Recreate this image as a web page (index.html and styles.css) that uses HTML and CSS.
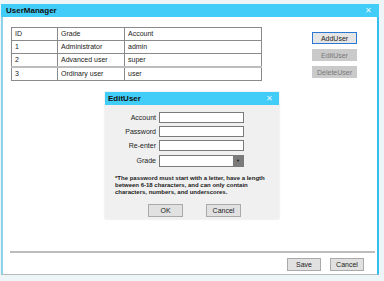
FILE: index.html
```html
<!DOCTYPE html>
<html lang="en">
<head>
  <meta charset="UTF-8">
  <meta name="viewport" content="width=device-width, initial-scale=1.0">
  <title>UserManager</title>
  <link rel="stylesheet" href="styles.css">
</head>
<body>
  <div class="window">
    <div class="titlebar">
      <span class="title">UserManager</span>
      <span class="close">&#x2715;</span>
    </div>
    <div class="content">
      <div class="top">
        <table class="users">
          <tr><td class="c-id">ID</td><td class="c-grade">Grade</td><td>Account</td></tr>
          <tr><td>1</td><td>Administrator</td><td>admin</td></tr>
          <tr class="before-sel"><td>2</td><td>Advanced user</td><td>super</td></tr>
          <tr><td>3</td><td>Ordinary user</td><td>user</td></tr>
        </table>
        <div class="side">
          <button class="btn primary">AddUser</button>
          <button class="btn disabled">EditUser</button>
          <button class="btn disabled">DeleteUser</button>
        </div>
      </div>
      <div class="separator"></div>
      <div class="footer">
        <button class="btn plain">Save</button>
        <button class="btn plain">Cancel</button>
      </div>
    </div>

    <div class="dialog">
      <div class="titlebar">
        <span class="title">EditUser</span>
        <span class="close">&#x2715;</span>
      </div>
      <div class="dialog-body">
        <div class="form">
          <label>Account</label><div class="input"></div>
          <label>Password</label><div class="input"></div>
          <label>Re-enter</label><div class="input"></div>
          <label>Grade</label><div class="input select"><span class="arrow">&#9660;</span></div>
        </div>
        <p class="note">*The password must start with a letter, have a length between 6-18 characters, and can only contain characters, numbers, and underscores.</p>
        <div class="dialog-actions">
          <button class="btn plain">OK</button>
          <button class="btn plain">Cancel</button>
        </div>
      </div>
    </div>
  </div>
</body>
</html>
```

FILE: styles.css
```css
body {
  margin: 0;
  background: #eef5f8;
  font-family: "Liberation Sans", Arial, sans-serif;
  font-size: 7px;
  color: #222;
}
.window {
  position: relative;
  margin: 4px 0 0 1px;
  width: 378px;
  height: 271px;
  box-sizing: border-box;
  background: #fff;
  border-left: 2px solid #8fd0ea;
  border-right: 2px solid #33bfef;
  border-bottom: 1px solid #b9b9b9;
  display: flex;
  flex-direction: column;
}
.titlebar {
  height: 13px;
  background: #42ccf8;
  display: flex;
  align-items: center;
  justify-content: space-between;
  padding: 0 6px 0 3px;
  flex-shrink: 0;
}
.window > .titlebar {
  margin: 0 -2px 0 -2px;
  padding-left: 5px;
  padding-right: 7px;
}
.title {
  font-weight: bold;
  font-size: 8px;
  color: #111;
}
.close {
  color: #e6f8ff;
  font-size: 8px;
}
.content {
  flex: 1;
  display: flex;
  flex-direction: column;
  padding: 10px 0 0 8px;
}
.top {
  display: flex;
  align-items: flex-start;
  flex: 1;
}
.users {
  border-collapse: collapse;
  width: 251px;
}
.users td {
  border: 1px solid #8a8a8a;
  height: 12px;
  padding: 0 0 0 3px;
  line-height: 12px;
}
.users .c-id { width: 42px; }
.users .c-grade { width: 63px; }
.users .before-sel td { border-bottom: 2px solid #bdbdbd; }
.side {
  display: flex;
  flex-direction: column;
  gap: 5px;
  margin: 5px 0 0 50px;
}
.btn {
  font-family: "Liberation Sans", Arial, sans-serif;
  font-size: 7px;
  height: 12px;
  padding: 0;
  box-sizing: border-box;
  border: 1px solid #c4c4c4;
  background: #e1e1e1;
  color: #222;
}
.side .btn { width: 45px; }
.btn.primary {
  border-color: #2a78d2;
  background: #e5e5e5;
}
.btn.disabled {
  background: #cacaca;
  border-color: #cacaca;
  color: #777;
}
.btn.plain {
  background: #e1e1e1;
  border-color: #aaa;
  width: 34px;
  height: 13px;
}
.separator {
  height: 2px;
  background: #bdbdbd;
  margin: 0 2px 0 -1px;
}
.footer {
  display: flex;
  justify-content: flex-end;
  gap: 9px;
  padding: 5px 13px 3px 0;
}
.dialog {
  position: absolute;
  left: 102px;
  top: 88px;
  width: 174px;
  box-shadow: 0 0 2px rgba(0, 0, 0, 0.15);
}
.dialog-body {
  background: #f0f0f0;
  height: 114px;
  box-sizing: border-box;
  padding: 7px 0 0 0;
}
.form {
  display: grid;
  grid-template-columns: 51px 85px;
  column-gap: 3px;
  row-gap: 3px;
  align-items: center;
}
.form label {
  text-align: right;
  font-size: 7px;
  color: #222;
}
.input {
  background: #fff;
  border: 1px solid #7a7a7a;
  box-sizing: border-box;
  height: 11px;
}
.input.select {
  height: 12px;
  margin-top: 1px;
  display: flex;
  justify-content: flex-end;
}
.arrow {
  width: 10px;
  background: #7b7b7b;
  color: #111;
  font-size: 4px;
  text-align: center;
  line-height: 10px;
}
.note {
  margin: 8px 10px 0 10px;
  font-size: 6px;
  font-weight: bold;
  line-height: 7px;
}
.dialog-actions {
  display: flex;
  gap: 23px;
  padding: 8px 0 0 43px;
}
.dialog-actions .btn { width: 35px; }
```
